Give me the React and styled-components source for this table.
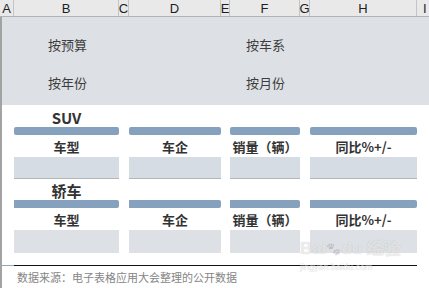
import React from "react";
import styled, { createGlobalStyle } from "styled-components";

const GlobalStyle = createGlobalStyle`
  html, body {
    margin: 0;
    padding: 0;
    background: #fff;
  }
  body {
    font-family: "Noto Sans CJK SC", "Noto Sans", sans-serif;
    width: 429px;
    height: 288px;
    overflow: hidden;
  }
`;

const letters = [
  ["A", 14],
  ["B", 105],
  ["C", 10],
  ["D", 92],
  ["E", 9],
  ["F", 70],
  ["G", 10],
  ["H", 107],
  ["I", 12],
];

// body columns: column A loses 2px to the left border
const bodyCols = "12px 105px 10px 92px 9px 70px 10px 107px 1fr";

const headers = ["车型", "车企", "销量（辆）", "同比%+/-"];
const dataCols = [2, 4, 6, 8];

const App = () => {
  return (
    <>
      <GlobalStyle />
      <Sheet>
        <HeaderRow>
          {letters.map(([l, w]) => (
            <ColHead key={l} style={{ width: w }}>
              {l}
            </ColHead>
          ))}
        </HeaderRow>
        <Body>
          <Panel>
            <FilterLabel $col={2} $row={1} $indent={34}>按预算</FilterLabel>
            <FilterLabel $col={6} $row={1} $indent={16}>按车系</FilterLabel>
            <FilterLabel $col={2} $row={2} $indent={34}>按年份</FilterLabel>
            <FilterLabel $col={6} $row={2} $indent={16}>按月份</FilterLabel>
          </Panel>

          <Section $titleH={22} $boxH={22}>
            <Title>SUV</Title>
            {dataCols.map((c) => (
              <Bar key={"b" + c} $col={c} $round />
            ))}
            {dataCols.map((c, i) => (
              <FieldHead key={"h" + c} $col={c}>
                {headers[i]}
              </FieldHead>
            ))}
            {dataCols.map((c) => (
              <ValueBox key={"v" + c} $col={c} $tone="#d6dce4" $underline />
            ))}
          </Section>

          <Section $titleH={21} $boxH={23}>
            <Title>轿车</Title>
            {dataCols.map((c) => (
              <Bar key={"b" + c} $col={c} />
            ))}
            {dataCols.map((c, i) => (
              <FieldHead key={"h" + c} $col={c}>
                {headers[i]}
              </FieldHead>
            ))}
            {dataCols.map((c) => (
              <ValueBox key={"v" + c} $col={c} $tone="#dde1e6" />
            ))}
          </Section>

          <Footer>
            <Rule>
              <RuleStub />
              <RuleLine />
            </Rule>
            <Source>数据来源：电子表格应用大会整理的公开数据</Source>
            <Watermark>
              Bai<Paw>🐾</Paw>du 经验
              <small>jingyan.baidu.com</small>
            </Watermark>
          </Footer>
        </Body>
      </Sheet>
    </>
  );
};

const Sheet = styled.div`
  width: 429px;
  height: 288px;
  display: flex;
  flex-direction: column;
  overflow: hidden;
`;

const HeaderRow = styled.div`
  display: flex;
  height: 16px;
  background: #e9e9e9;
  border-bottom: 1px solid #b3b3b3;
`;

const ColHead = styled.div`
  box-sizing: border-box;
  flex: none;
  height: 16px;
  display: flex;
  align-items: center;
  justify-content: center;
  border-right: 1px solid #c4c4c4;
  font-family: "Liberation Sans", Arial, sans-serif;
  font-size: 13px;
  color: #1e1e1e;
  &:last-child {
    border-right: none;
    justify-content: flex-start;
    padding-left: 6px;
  }
`;

const Body = styled.div`
  flex: 1;
  border-left: 2px solid #a3a3a3;
  display: flex;
  flex-direction: column;
  position: relative;
`;

const Panel = styled.div`
  height: 88px;
  box-sizing: border-box;
  padding: 8px 0 4px;
  background: #dde1e5;
  display: grid;
  grid-template-columns: ${bodyCols};
  grid-template-rows: 38px 38px;
`;

const FilterLabel = styled.div`
  grid-column: ${({ $col }) => $col} / span 3;
  grid-row: ${({ $row }) => $row};
  padding-left: ${({ $indent }) => $indent}px;
  display: flex;
  align-items: center;
  font-size: 13px;
  color: #3d3d3d;
`;

const Section = styled.div`
  display: grid;
  grid-template-columns: ${bodyCols};
  grid-template-rows: ${({ $titleH, $boxH }) => `${$titleH}px 8px 22px ${$boxH}px`};
`;

const Title = styled.div`
  grid-column: 2;
  grid-row: 1;
  display: flex;
  align-items: center;
  justify-content: center;
  font-size: 15px;
  font-weight: 700;
  color: #333;
  line-height: 1;
  padding-top: 2px;
`;

const Bar = styled.div`
  grid-column: ${({ $col }) => $col};
  grid-row: 2;
  background: #86a1be;
  border-radius: ${({ $round }) => ($round ? "2px" : "0 2px 2px 0")};
`;

const FieldHead = styled.div`
  grid-column: ${({ $col }) => $col};
  grid-row: 3;
  display: flex;
  align-items: center;
  justify-content: center;
  font-size: 13px;
  font-weight: 700;
  color: #333;
  white-space: nowrap;
`;

const ValueBox = styled.div`
  grid-column: ${({ $col }) => $col};
  grid-row: 4;
  background: ${({ $tone }) => $tone};
  border-bottom: ${({ $underline }) => ($underline ? "1px solid #b5b5b5" : "none")};
`;

const Footer = styled.div`
  margin-top: 12px;
  display: flex;
  flex-direction: column;
  position: relative;
`;

const Rule = styled.div`
  display: flex;
  height: 1px;
`;

const RuleStub = styled.div`
  width: 12px;
  background: #8fa7c2;
`;

const RuleLine = styled.div`
  width: 403px;
  background: #111;
`;

const Source = styled.div`
  padding: 3px 0 0 15px;
  font-size: 11px;
  line-height: 17px;
  color: #858585;
  white-space: nowrap;
`;

const Watermark = styled.div`
  position: absolute;
  left: 298px;
  top: -28px;
  display: flex;
  flex-wrap: wrap;
  align-items: center;
  width: 130px;
  font-family: "Liberation Sans", Arial, sans-serif;
  font-size: 17px;
  font-weight: 700;
  color: rgba(255, 255, 255, 0.6);
  text-shadow: 0 0 1px rgba(0, 0, 0, 0.2);
  pointer-events: none;
  small {
    width: 100%;
    font-size: 9px;
    font-weight: 400;
    margin-top: 2px;
  }
`;

const Paw = styled.span`
  font-size: 12px;
  opacity: 0.35;
  filter: grayscale(1);
`;

export default App;
